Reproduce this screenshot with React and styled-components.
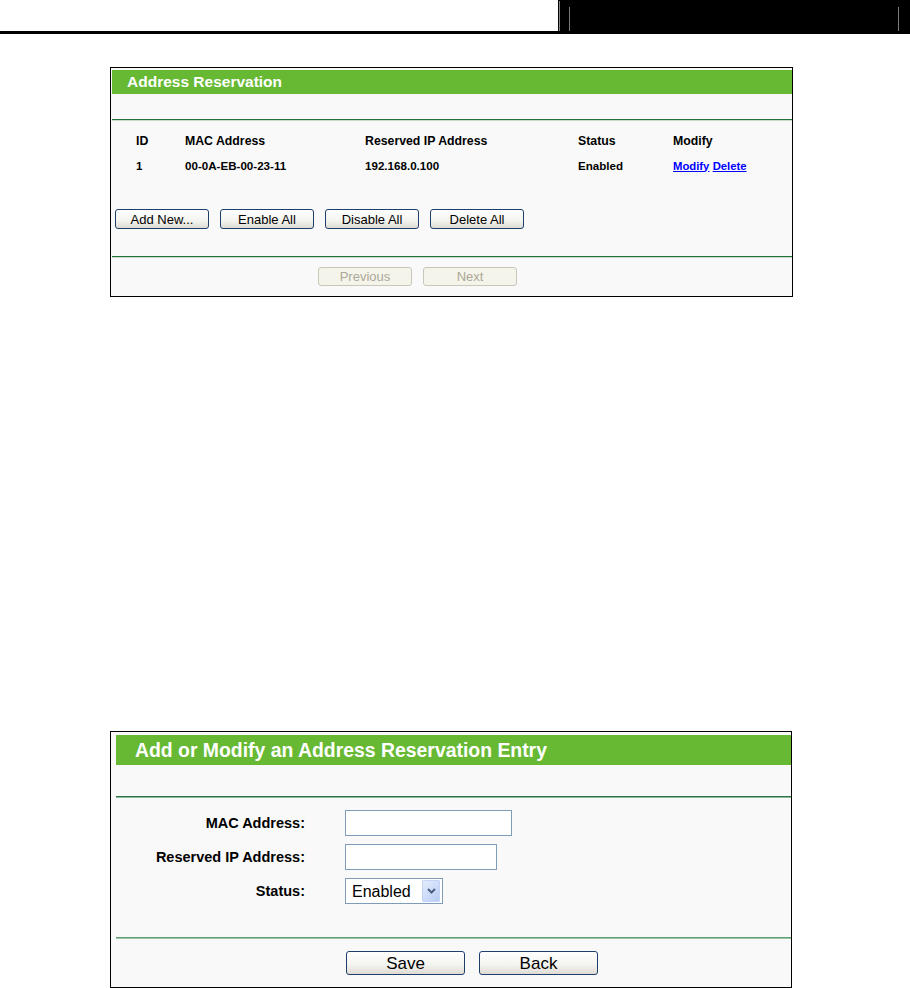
import React from 'react';
import styled, { createGlobalStyle } from 'styled-components';

const GlobalStyle = createGlobalStyle`
    html, body {
        margin: 0;
        padding: 0;
        background: #ffffff;
        font-family: "Liberation Sans", Arial, sans-serif;
        color: #000000;
    }
`;

const rows = [
    { id: 1, mac: '00-0A-EB-00-23-11', ip: '192.168.0.100', status: 'Enabled' },
];

const App = () => {
    return (
        <>
            <GlobalStyle />
            <Header>
                <HeaderLeft />
                <HeaderTab>
                    <TabEdge />
                    <TabFrame />
                </HeaderTab>
            </Header>

            <ListPanel>
                <ListTitle>Address Reservation</ListTitle>
                <Spacer $h={25} />
                <Rule $dark="#22703c" $light="#c9dcc9" />
                <Table>
                    <Cell $head>ID</Cell>
                    <Cell $head>MAC Address</Cell>
                    <Cell $head>Reserved IP Address</Cell>
                    <Cell $head>Status</Cell>
                    <Cell $head>Modify</Cell>
                    {rows.map((r) => (
                        <React.Fragment key={r.id}>
                            <Cell>{r.id}</Cell>
                            <Cell>{r.mac}</Cell>
                            <Cell>{r.ip}</Cell>
                            <Cell>{r.status}</Cell>
                            <Cell>
                                <LinkText href="#">Modify</LinkText>{' '}
                                <LinkText href="#">Delete</LinkText>
                            </Cell>
                        </React.Fragment>
                    ))}
                </Table>
                <ActionRow>
                    <XpButton>Add New...</XpButton>
                    <XpButton>Enable All</XpButton>
                    <XpButton>Disable All</XpButton>
                    <XpButton>Delete All</XpButton>
                </ActionRow>
                <Rule $dark="#22703c" $light="#c9dcc9" />
                <PagerRow>
                    <XpButton disabled>Previous</XpButton>
                    <XpButton disabled>Next</XpButton>
                </PagerRow>
            </ListPanel>

            <EditPanel>
                <EditTitle>Add or Modify an Address Reservation Entry</EditTitle>
                <Spacer $h={31} />
                <Rule $inset $dark="#2a7448" $light="#8fb89c" />
                <Form>
                    <Label>MAC Address:</Label>
                    <TextField $w={167} />
                    <Label>Reserved IP Address:</Label>
                    <TextField $w={152} />
                    <Label>Status:</Label>
                    <SelectWrap>
                        <Select defaultValue="1">
                            <option value="1">Enabled</option>
                            <option value="0">Disabled</option>
                        </Select>
                        <SelectArrow>
                            <svg width="9" height="6" viewBox="0 0 9 6">
                                <path d="M1 1 L4.5 4.5 L8 1" fill="none" stroke="#4d6185" strokeWidth="2" />
                            </svg>
                        </SelectArrow>
                    </SelectWrap>
                </Form>
                <Rule $inset $dark="#5f9f74" $light="#9cc4a7" />
                <SaveRow>
                    <BigButton>Save</BigButton>
                    <BigButton>Back</BigButton>
                </SaveRow>
            </EditPanel>
        </>
    );
};

const Header = styled.header`
    display: flex;
    height: 34px;
`;

const HeaderLeft = styled.div`
    width: 558px;
    flex: none;
    height: 31px;
    border-bottom: 3px solid #000;
`;

const HeaderTab = styled.div`
    flex: 1;
    display: flex;
    background: #000;
    padding: 1px 11px 3px 1px;
`;

const TabEdge = styled.div`
    width: 1px;
    background: #8a8a8a;
    flex: none;
`;

const TabFrame = styled.div`
    flex: 1;
    margin: 6px 0 0 9px;
    border-left: 1px solid #7a7a7a;
    border-right: 1px solid #7a7a7a;
`;

const Panel = styled.section`
    margin-left: 110px;
    border: 1px solid #000;
    background: #f9f9f9;
    box-sizing: border-box;
`;

const ListPanel = styled(Panel)`
    margin-top: 33px;
    width: 683px;
    height: 230px;
    padding-top: 2px;
`;

const EditPanel = styled(Panel)`
    margin-top: 434px;
    width: 682px;
    height: 257px;
    padding-top: 3px;
`;

const ListTitle = styled.h2`
    margin: 0 0 0 1px;
    height: 24px;
    background: #67b934;
    color: #fff;
    font-size: 15.5px;
    font-weight: bold;
    line-height: 24px;
    padding-left: 15px;
`;

const EditTitle = styled.h2`
    margin: 0 0 0 5px;
    height: 30px;
    background: #67b934;
    color: #fff;
    font-size: 19.4px;
    font-weight: bold;
    line-height: 30px;
    padding-left: 19px;
`;

const Spacer = styled.div`
    height: ${(p) => p.$h}px;
`;

const Rule = styled.div`
    margin-left: ${(p) => (p.$inset ? '5px' : '1px')};
    height: 1px;
    background: ${(p) => p.$dark};
    border-bottom: 1px solid ${(p) => p.$light};
`;

const Table = styled.div`
    display: grid;
    grid-template-columns: 49px 180px 213px 95px 1fr;
    grid-auto-rows: 24px;
    align-items: center;
    padding: 8px 0 0 25px;
`;

const Cell = styled.div`
    font-size: ${(p) => (p.$head ? '12.3px' : '11.6px')};
    font-weight: bold;
    white-space: nowrap;
`;

const LinkText = styled.a`
    color: #0000ff;
    font-size: 11.3px;
    font-weight: bold;
    text-decoration: underline;
`;

const ActionRow = styled.div`
    display: flex;
    gap: 11px;
    padding: 32px 0 27px 4px;
`;

const PagerRow = styled.div`
    display: flex;
    gap: 11px;
    padding: 9px 0 0 207px;
`;

const XpButton = styled.button`
    width: 94px;
    height: 20px;
    padding: 0;
    box-sizing: border-box;
    font-family: "Liberation Sans", Arial, sans-serif;
    font-size: 13px;
    color: #000;
    border: 1px solid #1c3f6e;
    border-radius: 3px;
    background: linear-gradient(#ffffff, #f3f3ef 60%, #dedbd2);

    &:disabled {
        height: 19px;
        color: #aca899;
        border-color: #c9c7ba;
        background: #f5f4ea;
    }
`;

const Form = styled.div`
    display: grid;
    grid-template-columns: 188px auto;
    column-gap: 40px;
    row-gap: 8px;
    align-items: center;
    justify-content: start;
    padding: 12px 0 33px 6px;
`;

const Label = styled.label`
    text-align: right;
    font-size: 14.5px;
    font-weight: bold;
`;

const TextField = styled.input`
    width: ${(p) => p.$w}px;
    height: 26px;
    box-sizing: border-box;
    border: 1px solid #7f9db9;
    background: #fff;
    font-family: "Liberation Sans", Arial, sans-serif;
    font-size: 15px;
    padding: 0 4px;
`;

const SelectWrap = styled.div`
    position: relative;
    width: 98px;
    height: 26px;
`;

const Select = styled.select`
    width: 98px;
    height: 26px;
    box-sizing: border-box;
    border: 1px solid #7f9db9;
    background: #fff;
    appearance: none;
    border-radius: 0;
    font-family: "Liberation Sans", Arial, sans-serif;
    font-size: 16px;
    padding: 0 0 0 6px;
    color: #000;
`;

const SelectArrow = styled.span`
    position: absolute;
    top: 2px;
    right: 3px;
    width: 18px;
    height: 22px;
    display: flex;
    align-items: center;
    justify-content: center;
    background: linear-gradient(135deg, #e4ecfc, #b8cdf5);
    border: 1px solid #c3d3f5;
    box-sizing: border-box;
    border-radius: 1px;
    pointer-events: none;
`;

const SaveRow = styled.div`
    display: flex;
    gap: 14px;
    padding: 12px 0 0 235px;
`;

const BigButton = styled(XpButton)`
    width: 119px;
    height: 24px;
    font-size: 17px;
    padding-top: 2px;
`;

export default App;
